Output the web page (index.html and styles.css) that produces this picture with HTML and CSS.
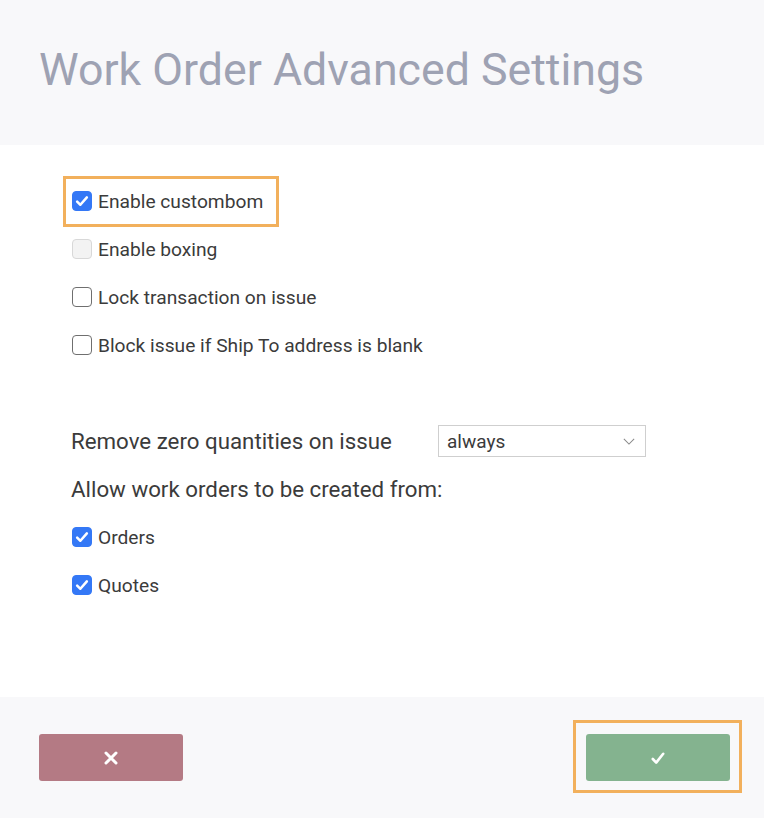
FILE: index.html
```html
<!DOCTYPE html>
<html lang="en">
<head>
<meta charset="utf-8">
<title>Work Order Advanced Settings</title>
<link rel="stylesheet" href="styles.css">
</head>
<body>
<div class="dialog">
  <header class="header">
    <h1 class="title">Work Order Advanced Settings</h1>
  </header>
  <main class="content">
    <div class="row"><label class="opt hl"><span class="box checked"><svg viewBox="0 0 20 20"><path d="M4.6 10.6l3.6 3.6 7.2-8.2" /></svg></span><span>Enable custombom</span></label></div>
    <div class="row"><label class="opt"><span class="box disabled"></span><span>Enable boxing</span></label></div>
    <div class="row"><label class="opt"><span class="box"></span><span>Lock transaction on issue</span></label></div>
    <div class="row"><label class="opt"><span class="box"></span><span>Block issue if Ship To address is blank</span></label></div>

    <div class="row setting spaced">
      <span class="setting-label fixed">Remove zero quantities on issue</span>
      <div class="select"><span>always</span><svg class="chev" viewBox="0 0 14 8"><path d="M1 1l6 6 6-6" /></svg></div>
    </div>
    <div class="row setting"><span class="setting-label">Allow work orders to be created from:</span></div>
    <div class="row"><label class="opt"><span class="box checked"><svg viewBox="0 0 20 20"><path d="M4.6 10.6l3.6 3.6 7.2-8.2" /></svg></span><span>Orders</span></label></div>
    <div class="row"><label class="opt"><span class="box checked"><svg viewBox="0 0 20 20"><path d="M4.6 10.6l3.6 3.6 7.2-8.2" /></svg></span><span>Quotes</span></label></div>
  </main>
  <footer class="footer">
    <button class="btn cancel" type="button"><svg viewBox="0 0 14 14"><path d="M2 2l10 10M12 2l-10 10" /></svg></button>
    <div class="btn-frame">
      <button class="btn confirm" type="button"><svg viewBox="0 0 14 14"><path d="M1.8 8l3.4 3.6 7-8.8" /></svg></button>
    </div>
  </footer>
</div>
</body>
</html>
```

FILE: styles.css
```css
html, body {
  margin: 0;
  padding: 0;
  background: #ffffff;
}
body {
  font-family: Roboto, "Liberation Sans", Arial, sans-serif;
  color: #3b3b3b;
}
.dialog {
  width: 764px;
  height: 818px;
  display: flex;
  flex-direction: column;
}
.header {
  height: 145px;
  background: #f8f8fa;
  display: flex;
  align-items: center;
  padding-left: 39px;
  box-sizing: border-box;
}
.title {
  margin: 0;
  font-weight: 400;
  font-size: 44.7px;
  color: #9ea2b3;
  line-height: 1;
  padding-bottom: 4px;
}
.content {
  height: 552px;
  box-sizing: border-box;
  padding: 32px 0 0 71px;
  background: #ffffff;
}
.row {
  height: 48px;
  display: flex;
  align-items: center;
}
.opt {
  display: inline-flex;
  align-items: center;
  gap: 6px;
  height: 45px;
  box-sizing: border-box;
  padding: 0 13px 0 6px;
  margin-left: -5px;
  font-size: 19.2px;
  color: #3b3b3b;
}
.hl {
  outline: 3px solid #f2b05c;
}
.box {
  width: 20px;
  height: 20px;
  box-sizing: border-box;
  border: 1.5px solid #6f6f6f;
  border-radius: 4px;
  background: #ffffff;
  display: inline-flex;
  align-items: center;
  justify-content: center;
  flex: none;
}
.box.checked {
  background: #3478f6;
  border-color: #3478f6;
}
.box.disabled {
  background: #f3f3f3;
  border-color: #d8d8d8;
}
.box svg {
  width: 20px;
  height: 20px;
  fill: none;
  stroke: #ffffff;
  stroke-width: 2.8;
  stroke-linecap: round;
  stroke-linejoin: round;
}
.spaced {
  margin-top: 48px;
}
.setting-label {
  font-size: 22.3px;
  color: #3b3b3b;
}
.setting-label.fixed {
  width: 367px;
  flex: none;
}
.select {
  width: 208px;
  height: 32px;
  box-sizing: border-box;
  border: 1px solid #cfcfcf;
  background: #ffffff;
  display: flex;
  align-items: center;
  justify-content: space-between;
  padding: 0 10px 0 8px;
  font-size: 19px;
  color: #3b3b3b;
}
.chev {
  width: 12px;
  height: 7px;
  fill: none;
  stroke: #8a8a8a;
  stroke-width: 1.2;
}
.footer {
  flex: 1;
  background: #f8f8fa;
  display: flex;
  justify-content: space-between;
  align-items: flex-start;
  padding: 23px 22px 0 39px;
  box-sizing: border-box;
}
.btn {
  width: 144px;
  height: 47px;
  border: none;
  border-radius: 3px;
  display: flex;
  align-items: center;
  justify-content: center;
  padding: 0;
  margin: 0;
}
.btn svg {
  width: 14px;
  height: 14px;
  fill: none;
  stroke: #ffffff;
  stroke-width: 3;
  stroke-linecap: round;
  stroke-linejoin: round;
}
.cancel {
  background: #b47a84;
  margin-top: 14px;
}
.confirm {
  background: #84b38f;
}
.confirm svg {
  stroke-width: 2.6;
}
.btn-frame {
  border: 3px solid #f2b05c;
  padding: 11px 9px 9px 10px;
}
```
